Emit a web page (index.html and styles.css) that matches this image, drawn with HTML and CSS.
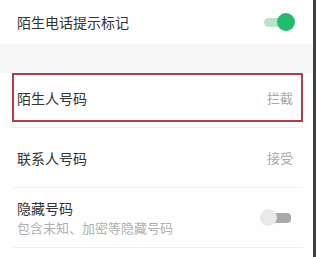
FILE: index.html
```html
<!DOCTYPE html>
<html lang="zh">
<head>
<meta charset="utf-8">
<link rel="stylesheet" href="styles.css">
</head>
<body>
<div class="screen">
  <div class="row-top">
    <span class="title">陌生电话提示标记</span>
    <span class="toggle on"></span>
  </div>
  <div class="band"></div>
  <div class="highlight">
    <span class="title">陌生人号码</span>
    <span class="value">拦截</span>
  </div>
  <div class="list">
    <div class="row">
      <span class="title">联系人号码</span>
      <span class="value">接受</span>
    </div>
    <div class="row">
      <div class="texts">
        <span class="title">隐藏号码</span>
        <span class="sub">包含未知、加密等隐藏号码</span>
      </div>
      <span class="toggle off"></span>
    </div>
  </div>
</div>
</body>
</html>
```
FILE: styles.css
```css
html, body {
  margin: 0;
  padding: 0;
  background: #ffffff;
}
body {
  font-family: "Noto Sans CJK SC", "Noto Sans", sans-serif;
}
.screen {
  width: 316px;
  height: 257px;
  box-sizing: border-box;
  border-right: 3px solid #3e3e3e;
  background: #fefefe;
  overflow: hidden;
}
.title {
  font-size: 14px;
  line-height: 18px;
  color: #333333;
}
.value {
  font-size: 13px;
  line-height: 18px;
  color: #a8a8a8;
}
.sub {
  font-size: 13px;
  line-height: 18px;
  color: #b0b0b0;
}
.row-top {
  height: 44px;
  display: flex;
  align-items: center;
  justify-content: space-between;
  padding: 0 18px 0 17px;
}
.band {
  height: 29px;
  background: #f7f7f7;
}
.highlight {
  margin: 0 10px 0 12px;
  height: 49px;
  box-sizing: border-box;
  border: 2px solid #b43a4e;
  display: flex;
  align-items: center;
  justify-content: space-between;
  padding: 0 8px 0 3px;
}
.list {
  margin: 5px 10px 0 13px;
  border-top: 1px solid #f0f0f0;
}
.row {
  height: 60px;
  box-sizing: border-box;
  border-bottom: 1px solid #f0f0f0;
  display: flex;
  align-items: center;
  justify-content: space-between;
  padding: 0 10px 0 4px;
}
.texts {
  display: flex;
  flex-direction: column;
}
.texts .title,
.texts .sub {
  line-height: 20px;
}
.toggle {
  position: relative;
  width: 31px;
  height: 18px;
}
.toggle::before,
.toggle::after {
  content: "";
  position: absolute;
  border-radius: 9px;
}
.toggle.on::before {
  left: 0;
  top: 5px;
  width: 26px;
  height: 9px;
  background: #b9e4c9;
}
.toggle.on::after {
  right: 0;
  top: 0;
  width: 18px;
  height: 18px;
  background: #1fbd6c;
}
.toggle.off {
  margin-right: 2px;
}
.toggle.off::before {
  right: 0;
  top: 4px;
  width: 24px;
  height: 10px;
  background: #a9a9a9;
  border-radius: 4px;
}
.toggle.off::after {
  left: 0;
  top: 0;
  width: 17px;
  height: 17px;
  background: #e9e9e9;
}
```
